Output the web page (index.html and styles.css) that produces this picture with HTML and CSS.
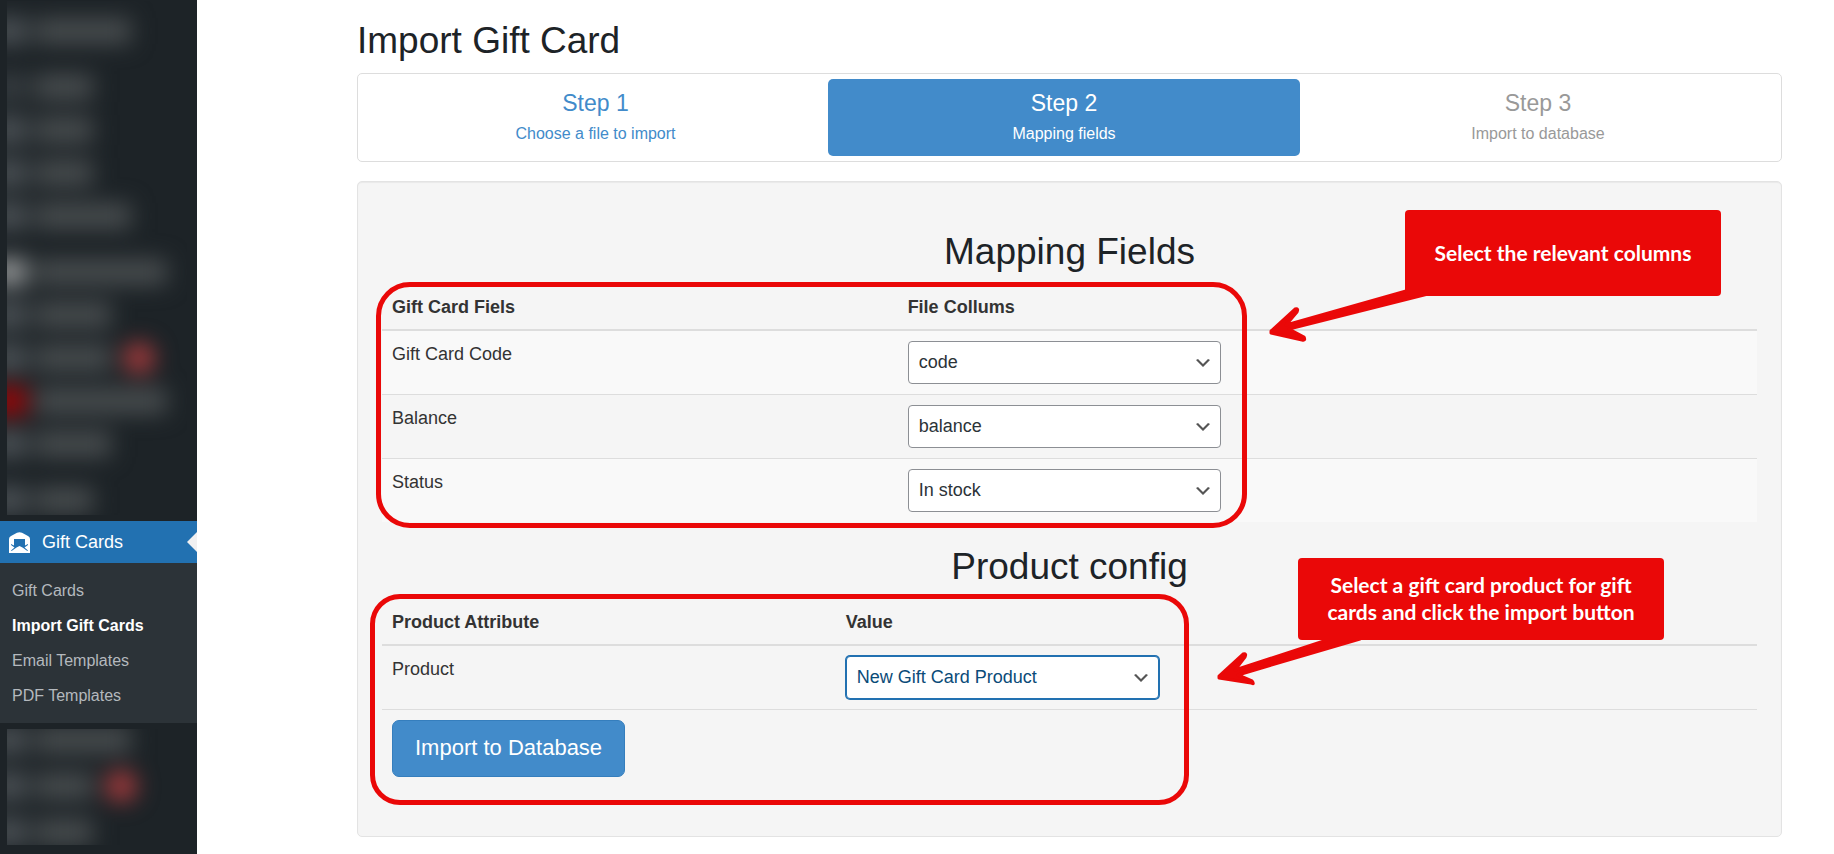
FILE: index.html
```html
<!DOCTYPE html>
<html lang="en">
<head>
<meta charset="utf-8">
<title>Import Gift Card</title>
<link rel="stylesheet" href="styles.css">
</head>
<body>
<div class="layout">
  <nav class="sidebar" aria-label="Admin menu">
    <div class="hidden-items hidden-items--top" aria-hidden="true">
      <ul class="smudge">
        <li><i class="dot"></i><b class="bar bar--l"></b></li>
        <li class="gap"><i class="dot dot--dim"></i><b class="bar bar--s"></b></li>
        <li><i class="dot"></i><b class="bar bar--s"></b></li>
        <li><i class="dot"></i><b class="bar bar--s"></b></li>
        <li><i class="dot"></i><b class="bar bar--l"></b></li>
        <li class="gap"><i class="dot dot--bright"></i><b class="bar bar--xl"></b></li>
        <li><i class="dot"></i><b class="bar bar--m"></b></li>
        <li><i class="dot"></i><b class="bar bar--m"></b><em class="count"></em></li>
        <li><i class="dot dot--red"></i><b class="bar bar--xl"></b></li>
        <li><i class="dot"></i><b class="bar bar--m"></b></li>
        <li class="gap"><i class="dot"></i><b class="bar bar--s"></b></li>
      </ul>
    </div>
    <a class="menu-current" href="#">
      <svg class="menu-icon" viewBox="0 0 21 21" aria-hidden="true">
        <path fill="#fff" d="M0 7 Q0 5 2 4 L8 .8 Q10.500-.4 13 .8 L19 4 Q21 5 21 7 V21 H0Z"/>
        <path fill="#2271b1" d="M5 7h11v6.500l3-1.500v1l-3.500 2.500 3.500 3-.6.600-4.900-3.600-3-1.500-3 1.500-4.900 3.600L2 18.500l3.500-3L2 13v-1l3 1.500z"/>
      </svg>
      Gift Cards
    </a>
    <ul class="submenu">
      <li><a href="#">Gift Cards</a></li>
      <li><a href="#" class="is-current" aria-current="page">Import Gift Cards</a></li>
      <li><a href="#">Email Templates</a></li>
      <li><a href="#">PDF Templates</a></li>
    </ul>
    <div class="hidden-items hidden-items--bottom" aria-hidden="true">
      <ul class="smudge">
        <li><i class="dot"></i><b class="bar bar--l"></b></li>
        <li><i class="dot"></i><b class="bar bar--s"></b><em class="count"></em></li>
        <li><i class="dot"></i><b class="bar bar--s"></b></li>
      </ul>
    </div>
  </nav>

  <main class="content">
    <h1 class="title">Import Gift Card</h1>
    <nav class="steps" aria-label="Import steps">
      <a class="step" href="#"><span class="step-name">Step 1</span><span>Choose a file to import</span></a>
      <a class="step step--active" href="#" aria-current="step"><span class="step-name">Step 2</span><span>Mapping fields</span></a>
      <a class="step step--disabled" aria-disabled="true"><span class="step-name">Step 3</span><span>Import to database</span></a>
    </nav>

    <form class="panel">
      <section class="group">
        <h2 class="title title--center">Mapping Fields</h2>
        <table class="grid grid--striped grid--mapping">
          <thead><tr><th>Gift Card Fiels</th><th>File Collums</th></tr></thead>
          <tbody>
            <tr>
              <td><label for="map-code">Gift Card Code</label></td>
              <td><div class="picker"><select id="map-code"><option>code</option></select><svg viewBox="0 0 20 20" aria-hidden="true"><path d="M5 6l5 5 5-5 2 1-7 7-7-7 2-1z"/></svg></div></td>
            </tr>
            <tr>
              <td><label for="map-balance">Balance</label></td>
              <td><div class="picker"><select id="map-balance"><option>balance</option></select><svg viewBox="0 0 20 20" aria-hidden="true"><path d="M5 6l5 5 5-5 2 1-7 7-7-7 2-1z"/></svg></div></td>
            </tr>
            <tr>
              <td><label for="map-status">Status</label></td>
              <td><div class="picker"><select id="map-status"><option>In stock</option></select><svg viewBox="0 0 20 20" aria-hidden="true"><path d="M5 6l5 5 5-5 2 1-7 7-7-7 2-1z"/></svg></div></td>
            </tr>
          </tbody>
        </table>
        <div class="outline outline--mapping"></div>
        <svg class="arrow arrow--mapping" viewBox="0 0 180 70" aria-hidden="true">
          <path d="M11 51 L35 29 Q39 28 37 32 L26 45 L146 11 L168 14 L29 49 L44 57 Q46 61 42 60 L11 53Z"/>
        </svg>
        <p class="callout callout--mapping">Select the relevant columns</p>
      </section>

      <section class="group">
        <h2 class="title title--center">Product config</h2>
        <table class="grid grid--product">
          <thead><tr><th>Product Attribute</th><th>Value</th></tr></thead>
          <tbody>
            <tr>
              <td><label for="product">Product</label></td>
              <td><div class="picker picker--focus"><select id="product"><option>New Gift Card Product</option></select><svg viewBox="0 0 20 20" aria-hidden="true"><path d="M5 6l5 5 5-5 2 1-7 7-7-7 2-1z"/></svg></div></td>
            </tr>
            <tr><td colspan="2"><button class="submit" type="button">Import to Database</button></td></tr>
          </tbody>
        </table>
        <div class="outline outline--product"></div>
        <svg class="arrow arrow--product" viewBox="0 0 170 60" aria-hidden="true">
          <path d="M9 46 L33 24 Q37 23 35 27 L25 40 L120 9 L150 9 L28 45 L42 51 Q45 55 41 53 L9 48Z"/>
        </svg>
        <p class="callout callout--product">Select a gift card product for gift cards and click the import button</p>
      </section>
    </form>
  </main>
</div>
</body>
</html>
```

FILE: styles.css
```css
* { box-sizing: border-box; }

body {
  margin: 0;
  background: #fff;
  color: #333;
  font: 18px/25px "Liberation Sans", Arial, sans-serif;
}

ul { list-style: none; margin: 0; padding: 0; }
a { text-decoration: none; }

.layout { display: flex; min-height: 100vh; }

/* Sidebar */
.sidebar { flex: 0 0 197px; background: #1d2327; }

.hidden-items { margin: 0 10px 0 7px; overflow: hidden; }
.hidden-items--top { height: 514px; margin-top: 1px; margin-bottom: 6px; padding-top: 8px; }
.hidden-items--bottom { height: 116px; margin-top: 6px; }

.smudge { margin-left: -16px; filter: blur(11px); }
.smudge li { display: flex; align-items: center; height: 43px; }
.hidden-items--bottom .smudge li { height: 46px; }
.hidden-items--bottom .smudge { margin-top: -12px; }
.smudge .gap { margin-top: 13px; }
.dot { width: 36px; height: 28px; margin-right: 8px; background: #4a5054; }
.dot--dim { background: #363c40; }
.dot--bright { background: #8e9192; }
.dot--red { background: #960709; }
.bar { height: 26px; background: #474c4e; }
.bar--s { width: 58px; }
.bar--m { width: 76px; }
.bar--l { width: 96px; }
.bar--xl { width: 132px; }
.count { width: 32px; height: 32px; margin-left: 12px; border-radius: 16px; background: #a03a3c; }

.menu-current {
  position: relative;
  display: flex;
  align-items: center;
  gap: 12px;
  height: 42px;
  padding-left: 9px;
  background: #2271b1;
  color: #fff;
}
.menu-current::after {
  content: "";
  position: absolute;
  right: 0;
  top: 11px;
  border: 10px solid transparent;
  border-left: 0;
  border-right-color: #f0f0f1;
}
.menu-icon { width: 21px; height: 21px; }

.submenu { padding: 10px 12px; background: #2c3338; font-size: 16px; line-height: 35px; }
.submenu a { color: #b4b9be; }
.submenu .is-current { color: #fff; font-weight: bold; }

/* Content */
.content { flex: 1; margin: 0 52px 0 160px; padding: 20px 0 17px; }

.title { margin: 0 0 12px; color: #1d2327; font-size: 37px; font-weight: normal; line-height: 41px; }
.title--center { text-align: center; }

.steps {
  display: grid;
  grid-template-columns: 465fr 472fr 476fr;
  margin-bottom: 19px;
  padding: 5px;
  border: 1px solid #ddd;
  border-radius: 5px;
}
.step {
  display: flex;
  flex-direction: column;
  align-items: center;
  gap: 6px;
  padding: 12px 11px 11px;
  border-radius: 5px;
  color: #428bca;
  font-size: 16px;
  line-height: 23px;
}
.step-name { font-size: 23px; line-height: 25px; }
.step--active { background: #428bca; color: #fff; }
.step--disabled { color: #999; }

.panel {
  padding: 25px 24px;
  border: 1px solid #e3e3e3;
  border-radius: 5px;
  background: #f5f5f5;
  box-shadow: inset 0 1px 1px rgba(0, 0, 0, .05);
}
.group { position: relative; padding-top: 24px; }
.group:last-child { padding-bottom: 24px; }

/* Tables */
.grid { width: 100%; border-spacing: 0; table-layout: fixed; }
.grid th, .grid td { padding: 10px; text-align: left; vertical-align: top; }
.grid th { padding: 11px 10px 9px; border-bottom: 2px solid #ddd; }
.grid tr + tr td { border-top: 1px solid #ddd; }
.grid label { display: block; padding-top: 1px; }
.grid--mapping th:first-child { width: 37.5%; }
.grid--product th:first-child { width: 33%; }
.grid--striped tbody tr:nth-child(odd) { background: #f9f9f9; }

/* Controls */
.picker { position: relative; width: 313px; }
.picker select {
  display: block;
  width: 100%;
  height: 43px;
  padding: 0 30px 0 10px;
  appearance: none;
  border: 1px solid #8c8f94;
  border-radius: 4px;
  background: #fff;
  color: #2c3338;
  font: inherit;
}
.picker svg { position: absolute; right: 8px; top: 12px; width: 20px; height: 20px; fill: #555; pointer-events: none; }
.picker--focus select { border-color: #2271b1; box-shadow: 0 0 0 1px #2271b1; color: #0a4b78; }

.submit {
  display: block;
  height: 57px;
  padding: 0 22px 2px;
  border: 1px solid #357ebd;
  border-radius: 7px;
  background: #428bca;
  color: #fff;
  font: 22px/30px "Liberation Sans", Arial, sans-serif;
}

/* Help annotations, drawn over the form */
.outline { position: absolute; border: 5px solid #ea0808; pointer-events: none; }
.outline--mapping { left: -6px; top: 75px; width: 871px; height: 246px; border-radius: 34px; }
.outline--product { left: -12px; top: 72px; width: 819px; height: 211px; border-radius: 30px; }

.arrow { position: absolute; fill: #ea0808; stroke: #ea0808; stroke-width: 3; stroke-linejoin: round; }
.arrow--mapping { left: 878px; top: 73px; width: 180px; height: 70px; }
.arrow--product { left: 828px; top: 108px; width: 170px; height: 60px; }

.callout {
  position: absolute;
  display: flex;
  align-items: center;
  justify-content: center;
  margin: 0;
  padding: 0 24px 2px;
  border-radius: 4px;
  background: #ea0808;
  color: #fff;
  font: bold 21px/27px Lato, sans-serif;
  text-align: center;
}
.callout--mapping { left: 1023px; top: 3px; width: 316px; height: 86px; }
.callout--product { left: 916px; top: 36px; width: 366px; height: 82px; }
```
